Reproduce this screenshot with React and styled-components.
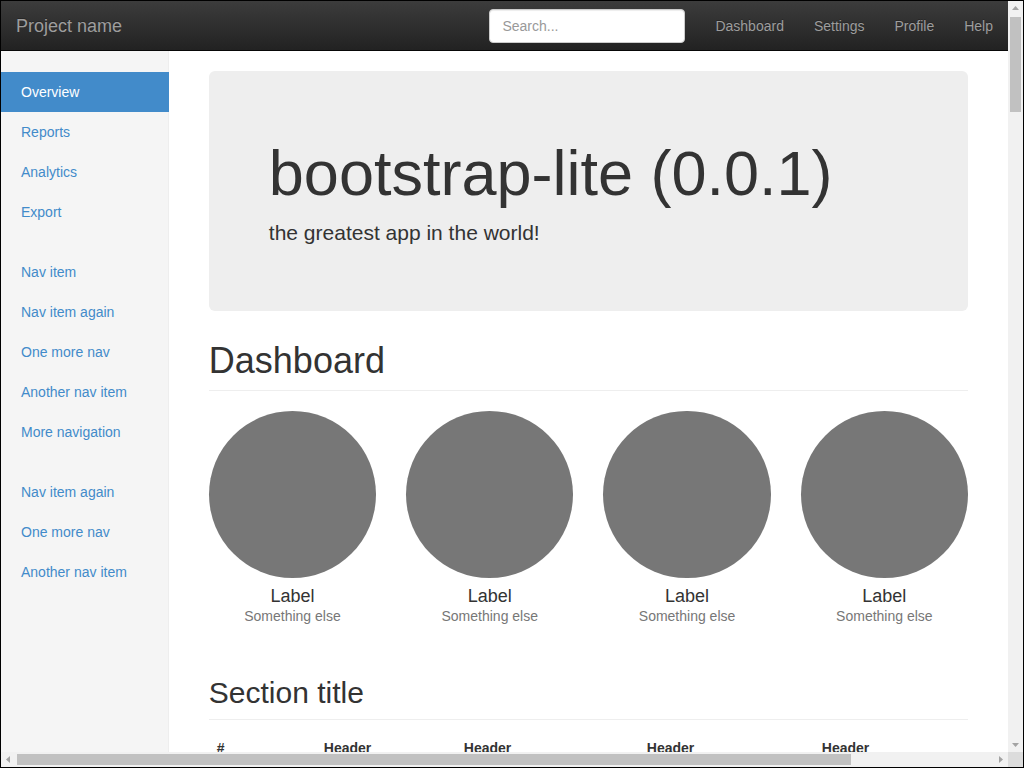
import React from "react";
import styled, { createGlobalStyle } from "styled-components";

const GlobalStyle = createGlobalStyle`
  *, *::before, *::after { box-sizing: border-box; }
  html, body { margin: 0; padding: 0; background: #fff; }
  body {
    font-family: "Liberation Sans", Helvetica, Arial, sans-serif;
    font-size: 14px;
    line-height: 1.428571;
    color: #333;
  }
`;

/* ---------- window frame with scrollbars ---------- */

const Frame = styled.div`
  display: grid;
  grid-template-columns: minmax(0, 1fr) 15px;
  grid-template-rows: minmax(0, 1fr) 15px;
  width: 1024px;
  height: 768px;
  border: 1px solid #000;
  background: #fff;
`;

const Viewport = styled.div`
  overflow: hidden;
  min-width: 0;
  min-height: 0;
`;

const ScrollBar = styled.div`
  display: flex;
  flex-direction: ${(p) => (p.$vertical ? "column" : "row")};
  background: #f1f1f1;
`;

const ArrowButton = styled.div`
  flex: 0 0 15px;
  width: 15px;
  height: 15px;
  display: flex;
  align-items: center;
  justify-content: center;
`;

const Track = styled.div`
  flex: 1 1 auto;
  display: flex;
  flex-direction: ${(p) => (p.$vertical ? "column" : "row")};
  padding: ${(p) => (p.$vertical ? "1px 2px" : "2px 1px")};
`;

const Thumb = styled.div`
  flex: 0 0 ${(p) => p.$size}px;
  background: #c1c1c1;
`;

const Corner = styled.div`
  background: #dcdcdc;
`;

const Arrow = ({ dir }) => {
  const pts = {
    up: "4,9 11,9 7.5,5",
    down: "4,6 11,6 7.5,10",
    left: "9,4 9,11 5,7.5",
    right: "6,4 6,11 10,7.5",
  }[dir];
  return (
    <ArrowButton>
      <svg width="15" height="15" viewBox="0 0 15 15">
        <polygon points={pts} fill="#a3a3a3" />
      </svg>
    </ArrowButton>
  );
};

/* ---------- navbar ---------- */

const Navbar = styled.nav`
  display: flex;
  align-items: flex-start;
  height: 50px;
  background-image: linear-gradient(to bottom, #3c3c3c 0, #222 100%);
  background-color: #222;
  border-bottom: 1px solid #080808;
`;

const Brand = styled.a`
  display: block;
  padding: 15px;
  font-size: 18px;
  line-height: 20px;
  color: #9d9d9d;
  text-decoration: none;
  text-shadow: 0 -1px 0 rgba(0, 0, 0, 0.25);
`;

const Spacer = styled.div`
  flex: 1;
`;

const SearchInput = styled.input`
  display: block;
  width: 196px;
  height: 34px;
  margin: 8px 15px 0 0;
  padding: 6px 12px;
  font-family: inherit;
  font-size: 14px;
  line-height: 1.428571;
  color: #555;
  background: #fff;
  border: 1px solid #ccc;
  border-radius: 4px;
  box-shadow: inset 0 1px 1px rgba(0, 0, 0, 0.075);
  outline: none;
  &::placeholder { color: #999; }
`;

const TopNav = styled.ul`
  display: flex;
  list-style: none;
  margin: 0;
  padding: 0;
`;

const TopLink = styled.a`
  display: block;
  padding: 15px;
  line-height: 20px;
  color: #9d9d9d;
  text-decoration: none;
  text-shadow: 0 -1px 0 rgba(0, 0, 0, 0.25);
`;

/* ---------- layout ---------- */

const Layout = styled.div`
  display: flex;
  align-items: stretch;
  min-height: calc(100% - 50px);
`;

const Sidebar = styled.aside`
  flex: 0 0 16.666667%;
  padding: 21px 20px 20px;
  background: #f5f5f5;
  border-right: 1px solid #eee;
`;

const SideNav = styled.ul`
  list-style: none;
  margin: 0 -21px 20px -20px;
  padding: 0;
`;

const SideLink = styled.a`
  display: block;
  padding: 10px 20px;
  line-height: 20px;
  text-decoration: none;
  color: ${(p) => (p.$active ? "#fff" : "#428bca")};
  background: ${(p) => (p.$active ? "#428bca" : "transparent")};
`;

const Main = styled.main`
  flex: 1 1 auto;
  min-width: 0;
  padding: 20px 40px;
`;

const Jumbotron = styled.div`
  padding: 48px 60px;
  margin-bottom: 30px;
  background: #eee;
  border-radius: 6px;
`;

const JumboTitle = styled.h1`
  margin: 20px 0 10px;
  font-size: 63px;
  font-weight: 500;
  line-height: 1.1;
  color: inherit;
`;

const JumboLead = styled.p`
  margin: 0 0 15px;
  font-size: 21px;
  font-weight: 200;
  line-height: 1.428571;
`;

const PageHeader = styled.h1`
  margin: 0 0 20px;
  padding-bottom: 9px;
  font-size: 36px;
  font-weight: 500;
  line-height: 1.1;
  border-bottom: 1px solid #eee;
`;

const Placeholders = styled.div`
  display: grid;
  grid-template-columns: repeat(4, 1fr);
  column-gap: 30px;
  margin-bottom: 30px;
  text-align: center;
`;

const Placeholder = styled.div`
  display: flex;
  flex-direction: column;
  align-items: center;
  margin-bottom: 20px;
`;

const Circle = styled.div`
  width: 100%;
  aspect-ratio: 1 / 1;
  border-radius: 50%;
  background: #777;
`;

const PlaceholderLabel = styled.h4`
  margin: 9px 0 0;
  font-size: 18px;
  font-weight: 500;
  line-height: 1.1;
`;

const Muted = styled.span`
  color: #777;
  line-height: 19px;
`;

const SubHeader = styled.h2`
  margin: 20px 0 10px;
  padding-bottom: 10px;
  font-size: 30px;
  font-weight: 500;
  line-height: 1.1;
  border-bottom: 1px solid #eee;
`;

const Table = styled.table`
  width: 969px;
  table-layout: fixed;
  border-collapse: collapse;
  border-spacing: 0;
  margin-bottom: 20px;
`;

const Th = styled.th`
  padding: 8px;
  text-align: left;
  font-weight: bold;
  line-height: 20px;
  vertical-align: bottom;
  border-bottom: 2px solid #ddd;
`;

const Row = styled.tr`
  background: ${(p) => (p.$odd ? "#f9f9f9" : "transparent")};
`;

const Td = styled.td`
  padding: 8px;
  line-height: 20px;
  vertical-align: top;
  border-top: 1px solid #ddd;
`;

const sideGroups = [
  ["Overview", "Reports", "Analytics", "Export"],
  ["Nav item", "Nav item again", "One more nav", "Another nav item", "More navigation"],
  ["Nav item again", "One more nav", "Another nav item"],
];

const topLinks = ["Dashboard", "Settings", "Profile", "Help"];

const rows = [
  ["1,001", "Lorem", "ipsum", "dolor", "sit"],
  ["1,002", "amet", "consectetur", "adipiscing", "elit"],
  ["1,003", "Integer", "nec", "odio", "Praesent"],
];

const colWidths = [107, 140, 183, 175, 364];

export default function App() {
  return (
    <>
      <GlobalStyle />
      <Frame>
        <Viewport>
          <Navbar>
            <Brand href="#">Project name</Brand>
            <Spacer />
            <SearchInput type="text" placeholder="Search..." />
            <TopNav>
              {topLinks.map((l) => (
                <li key={l}>
                  <TopLink href="#">{l}</TopLink>
                </li>
              ))}
            </TopNav>
          </Navbar>
          <Layout>
            <Sidebar>
              {sideGroups.map((g, gi) => (
                <SideNav key={gi}>
                  {g.map((item, ii) => (
                    <li key={item + ii}>
                      <SideLink href="#" $active={gi === 0 && ii === 0}>
                        {item}
                      </SideLink>
                    </li>
                  ))}
                </SideNav>
              ))}
            </Sidebar>
            <Main>
              <Jumbotron>
                <JumboTitle>bootstrap-lite (0.0.1)</JumboTitle>
                <JumboLead>the greatest app in the world!</JumboLead>
              </Jumbotron>
              <PageHeader>Dashboard</PageHeader>
              <Placeholders>
                {[0, 1, 2, 3].map((i) => (
                  <Placeholder key={i}>
                    <Circle />
                    <PlaceholderLabel>Label</PlaceholderLabel>
                    <Muted>Something else</Muted>
                  </Placeholder>
                ))}
              </Placeholders>
              <SubHeader>Section title</SubHeader>
              <Table>
                <colgroup>
                  {colWidths.map((w, i) => (
                    <col key={i} style={{ width: w }} />
                  ))}
                </colgroup>
                <thead>
                  <tr>
                    <Th>#</Th>
                    <Th>Header</Th>
                    <Th>Header</Th>
                    <Th>Header</Th>
                    <Th>Header</Th>
                  </tr>
                </thead>
                <tbody>
                  {rows.map((r, i) => (
                    <Row key={r[0]} $odd={i % 2 === 0}>
                      {r.map((c, ci) => (
                        <Td key={ci}>{c}</Td>
                      ))}
                    </Row>
                  ))}
                </tbody>
              </Table>
            </Main>
          </Layout>
        </Viewport>
        <ScrollBar $vertical>
          <Arrow dir="up" />
          <Track $vertical>
            <Thumb $size={95} />
          </Track>
          <Arrow dir="down" />
        </ScrollBar>
        <ScrollBar>
          <Arrow dir="left" />
          <Track>
            <Thumb $size={834} />
          </Track>
          <Arrow dir="right" />
        </ScrollBar>
        <Corner />
      </Frame>
    </>
  );
}
